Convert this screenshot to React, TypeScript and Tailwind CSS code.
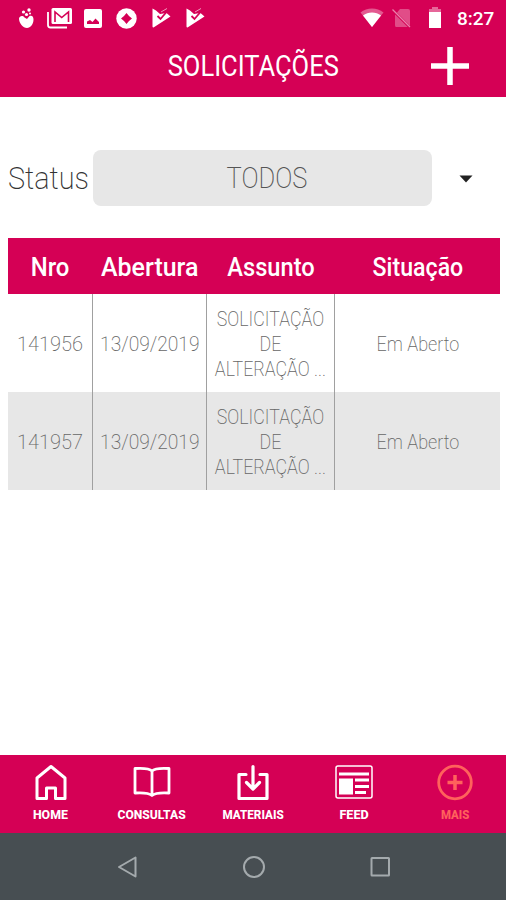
import type { ReactNode } from "react";

const requests = [
  { id: "141956", date: "13/09/2019", status: "Em Aberto" },
  { id: "141957", date: "13/09/2019", status: "Em Aberto" },
];

function StatusBar() {
  return (
    <div className="flex h-9 items-center justify-between pl-[18px] pr-[10px]">
      <div className="flex items-center">
        <svg className="mr-[12px]" width="17" height="22" viewBox="0 0 17 22" fill="#fff">
          <path d="M1 11.500C1.500 9 4.500 8 6.500 10.500L9 12L11.500 9C14 8 15.500 9.500 15.500 12.500C15.500 17 12.500 21 9 21C5 21 1 16 1 11.500Z" />
          <circle cx="5.500" cy="5" r="1.600" />
          <circle cx="11" cy="3" r="1.700" />
          <circle cx="8.500" cy="7.500" r="1.600" />
          <circle cx="12" cy="6.500" r="1" />
        </svg>
        <svg className="mr-[11px]" width="26" height="22" viewBox="0 0 26 22">
          <path d="M1 5V18Q1 20.500 3.500 20.500H20" fill="none" stroke="#fff" strokeWidth="1.800" />
          <rect x="4.500" y="1" width="20.500" height="16" rx="1.500" fill="#fff" />
          <path d="M8 15V5L14.700 10.500L21.500 5V15" fill="none" stroke="#d50055" strokeWidth="1.600" />
        </svg>
        <svg className="mr-[14px]" width="18" height="19" viewBox="0 0 18 19">
          <rect width="18" height="19" rx="2" fill="#fff" />
          <path d="M3 15V12.500L6 11L8.500 13L11.500 9.500L15 13V15Z" fill="#d50055" />
        </svg>
        <svg className="mr-[15px]" width="21" height="21" viewBox="0 0 21 21">
          <circle cx="10.500" cy="10.500" r="10.200" fill="#fff" />
          <path d="M10.500 5L13 8L16 10.500L13 13L10.500 16L8 13L5 10.500L8 8Z" fill="#d50055" />
        </svg>
        <PlayCheck />
        <PlayCheck />
      </div>
      <div className="flex items-center">
        <svg className="mr-[8px]" width="24" height="20" viewBox="0 0 24 20">
          <path d="M0.500 4.500C7-1 17-1 23.500 4.500L12 19Z" fill="#fff" opacity=".35" />
          <path d="M3 7.500C8 3.500 16 3.500 21 7.500L12 19Z" fill="#fff" />
        </svg>
        <svg className="mr-[16px]" width="20" height="20" viewBox="0 0 20 20">
          <path d="M8 1H16Q18 1 18 3V19H4Q3 19 3 17V7Z" fill="#fff" opacity=".3" />
          <path d="M1 2.500L18 19.500" stroke="#d50055" strokeWidth="2.500" />
          <path d="M0.500 1.500L18 19" stroke="#fff" strokeWidth="1.200" opacity=".5" />
        </svg>
        <svg className="mr-[15px]" width="14" height="22" viewBox="0 0 14 22" fill="#fff">
          <path d="M4 0H10V2H13V5H1V2H4Z" opacity=".4" />
          <path d="M1 5H13V21H1Z" />
        </svg>
        <span className="w-[39px] text-[19px] font-medium leading-none">8:27</span>
      </div>
    </div>
  );
}

function PlayCheck() {
  return (
    <svg className="mr-[15px]" width="19" height="20" viewBox="0 0 19 20">
      <path d="M0.500 0.500L4 2.500L8 6L14.500 5L18.500 8.500L1.500 19.500Q0.500 19.500 0.500 18.500Z" fill="#fff" />
      <path d="M9 4L15 0.500" stroke="#fff" strokeWidth="1" opacity=".6" />
      <path d="M5.500 8L8.500 11L14.500 4" fill="none" stroke="#d50055" strokeWidth="1.800" />
    </svg>
  );
}

function Cell({ children, last = false }: { children: ReactNode; last?: boolean }) {
  return (
    <div className={`flex items-center justify-center whitespace-nowrap pt-[2px] text-center ${last ? "" : "border-r border-[#a0a0a0]"}`}>
      {children}
    </div>
  );
}

function NavItem({ icon, children, active = false }: { icon: ReactNode; children: ReactNode; active?: boolean }) {
  return (
    <div className={`flex flex-col items-center pt-[9px] text-[13px] font-extrabold leading-[15px] ${active ? "text-[#ff625c]" : "text-white"}`}>
      <div className="mb-[6px] h-[37px]">{icon}</div>
      {children}
    </div>
  );
}

export default function App() {
  return (
    <div className="flex h-[900px] w-[506px] flex-col overflow-hidden bg-white font-['Roboto',sans-serif]">
      <header className="h-[97px] shrink-0 bg-[#d50055] text-white">
        <StatusBar />
        <div className="grid h-[61px] grid-cols-[112px_1fr_112px] items-center">
          <h1 className="col-start-2 pb-[2px] text-center text-[29px] leading-[58px]">
            <span className="inline-block scale-x-[0.88]">SOLICITAÇÕES</span>
          </h1>
          <svg className="mb-px ml-[37px]" width="38" height="38" viewBox="0 0 38 38">
            <path d="M19 0V38M0 19H38" stroke="#fff" strokeWidth="5.500" />
          </svg>
        </div>
      </header>

      <main className="flex-1 px-2 pt-[53px]">
        <div className="flex h-14 items-center">
          <div className="w-[85px] pt-[2px] text-[31px] font-extralight text-[#333]">
            <span className="inline-block origin-left scale-x-[0.93]">Status</span>
          </div>
          <div className="flex h-14 w-[339px] items-center justify-center rounded-lg bg-[#e7e7e7] pl-[9px] pt-[2px] text-[29px] font-extralight text-[#555]">
            <span className="inline-block scale-x-[0.88]">TODOS</span>
          </div>
          <svg className="ml-[27px] mt-px" width="14" height="8" viewBox="0 0 14 8">
            <path d="M0.500 0.500H13.500L7 7.500Z" fill="#222" />
          </svg>
        </div>

        <section className="mt-8 w-[492px]">
          <div className="grid h-14 grid-cols-[85px_114px_128px_165px] bg-[#d50055] pt-[2px] text-[26px] font-medium text-white">
            <div className="flex items-center justify-center"><span className="scale-x-[0.92]">Nro</span></div>
            <div className="flex items-center justify-center"><span className="scale-x-[0.96]">Abertura</span></div>
            <div className="flex items-center justify-center"><span className="scale-x-[0.91]">Assunto</span></div>
            <div className="flex items-center justify-center"><span className="scale-x-[0.89]">Situação</span></div>
          </div>
          {requests.map((request) => (
            <div
              key={request.id}
              className="grid h-[98px] grid-cols-[85px_114px_128px_165px] text-[20px] font-extralight leading-[25px] text-[#666] even:bg-white odd:bg-[#e7e7e7]"
            >
              <Cell><span>{request.id}</span></Cell>
              <Cell><span className="scale-x-[0.96]">{request.date}</span></Cell>
              <Cell>
                <span className="scale-x-[0.89]">SOLICITAÇÃO<br />DE<br />ALTERAÇÃO ...</span>
              </Cell>
              <Cell last><span className="scale-x-[0.9]">{request.status}</span></Cell>
            </div>
          ))}
        </section>
      </main>

      <nav className="grid h-[78px] shrink-0 grid-cols-5 bg-[#d50055]">
        <NavItem
          icon={
            <svg width="32" height="37" viewBox="0 0 32 37" fill="none" stroke="currentColor" strokeWidth="3" strokeLinejoin="round">
              <path d="M2 14L16 2.500L30 14V34.500H20.500V24H11.500V34.500H2Z" />
            </svg>
          }
        >
          <span className="scale-x-[0.95]">HOME</span>
        </NavItem>
        <NavItem
          icon={
            <svg width="38" height="37" viewBox="0 0 38 37" fill="none" stroke="currentColor" strokeWidth="2.800" strokeLinejoin="round">
              <path d="M19 7C16 4 10 4 2 4.500V29C10 28.500 16 29 19 31.500C22 29 28 28.500 36 29V4.500C28 4 22 4 19 7ZM19 7V31" />
            </svg>
          }
        >
          <span className="scale-x-[0.93]">CONSULTAS</span>
        </NavItem>
        <NavItem
          icon={
            <svg width="34" height="37" viewBox="0 0 34 37" fill="none" stroke="currentColor" strokeWidth="3.200" strokeLinejoin="round" strokeLinecap="round">
              <path d="M10 10.500H3V34.500H31V10.500H24M17 2.500V24M10.500 18.500L17 25L23.500 18.500" />
            </svg>
          }
        >
          <span className="scale-x-[0.9]">MATERIAIS</span>
        </NavItem>
        <NavItem
          icon={
            <svg width="38" height="37" viewBox="0 0 38 37" fill="none" stroke="currentColor">
              <rect x="1" y="2" width="36" height="32" rx="2" strokeWidth="1.500" />
              <path d="M4 10H34M20 16H34M20 22.500H34M20 28.500H31" strokeWidth="3" />
              <rect x="4" y="14.500" width="14" height="16" fill="currentColor" stroke="none" />
            </svg>
          }
        >
          <span className="scale-x-[0.97]">FEED</span>
        </NavItem>
        <NavItem
          active
          icon={
            <svg width="36" height="37" viewBox="0 0 36 37" fill="none" stroke="currentColor">
              <circle cx="18" cy="18.500" r="16.300" strokeWidth="2.800" />
              <path d="M18 11V26M10.500 18.500H25.500" strokeWidth="3.500" />
            </svg>
          }
        >
          <span className="scale-x-[0.88]">MAIS</span>
        </NavItem>
      </nav>

      <footer className="flex h-[67px] shrink-0 items-center justify-center gap-[103px] bg-[#474e52] pl-px">
        <svg width="22" height="24" viewBox="0 0 22 24" fill="none" stroke="#a4aaad" strokeWidth="2" strokeLinejoin="round">
          <path d="M18.500 2.500V21.500L2 12Z" />
        </svg>
        <svg width="24" height="24" viewBox="0 0 24 24" fill="none" stroke="#a4aaad" strokeWidth="2">
          <circle cx="12" cy="12" r="10" />
        </svg>
        <svg width="22" height="24" viewBox="0 0 22 24" fill="none" stroke="#a4aaad" strokeWidth="2">
          <rect x="2.500" y="3" width="17.500" height="17.500" rx=".5" />
        </svg>
      </footer>
    </div>
  );
}
